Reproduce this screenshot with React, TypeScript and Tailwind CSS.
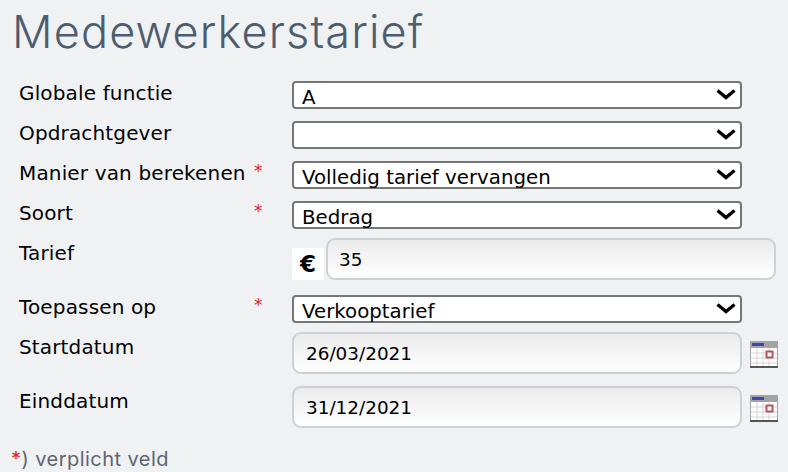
const font = "font-['DejaVu_Sans',sans-serif]";

function Label({ text, required }: { text: string; required?: boolean }) {
  return (
    <div className="w-[292px] shrink-0 pl-[19px] flex text-[20px] tracking-[0.15px] leading-[24px] text-black whitespace-nowrap">
      <span className="w-[235px] shrink-0">{text}</span>
      {required && <span className="text-[#e0241b] text-[17px] leading-[20px]">*</span>}
    </div>
  );
}

function SelectBox({ value }: { value: string }) {
  return (
    <div className="relative w-[450px] h-[28px] bg-white border-2 border-[#767676] rounded-[4px] pl-[8px] pt-[3px] text-[19.8px] leading-[24px] text-black whitespace-nowrap">
      {value}
      <svg className="absolute right-[4px] top-[5px]" width="20" height="12" viewBox="0 0 20 12">
        <path d="M1.5 2.5 L10 9.5 L18.5 2.5" fill="none" stroke="#000" strokeWidth="3.4" />
      </svg>
    </div>
  );
}

function TextBox({ value, textPad }: { value: string; textPad: string }) {
  return (
    <input
      readOnly
      defaultValue={value}
      className={`${font} ${textPad} w-[450px] h-[42px] rounded-[9px] border-2 border-[#cdd0d5] bg-gradient-to-b from-[#ebebeb] to-white text-[18.4px] text-black outline-none`}
    />
  );
}

function CalendarIcon() {
  return (
    <svg width="28" height="27" viewBox="0 0 28 27" className="ml-[8px] mt-[9px] shrink-0">
      <rect x="0" y="0" width="28" height="27" fill="#a3a3a3" />
      <rect x="1" y="7" width="26" height="18" fill="#fff" />
      <rect x="2" y="2" width="12" height="3" fill="#4343b5" />
      <path d="M7 7v18M13 7v18M19 7v18M1 12h26M1 17h26M1 22h26" stroke="#d4d4d4" strokeWidth="1" />
      <rect x="16.5" y="10.5" width="6" height="6" fill="#fff" stroke="#b5555a" strokeWidth="2" />
      <rect x="0" y="25" width="28" height="2" fill="#555" />
    </svg>
  );
}

export default function App() {
  return (
    <div className={`${font} w-[788px] h-[472px] overflow-hidden bg-[#f0f1f3]`}>
      <h1 className="pl-[12px] pt-[5px] h-[81px] font-['Inter',sans-serif] font-light text-[45px] tracking-[1.15px] leading-[54px] text-[#4d5d70]">
        Medewerkerstarief
      </h1>

      <div className="flex">
        <Label text="Globale functie" />
        <SelectBox value="A" />
      </div>
      <div className="flex mt-[12px]">
        <Label text="Opdrachtgever" />
        <SelectBox value="" />
      </div>
      <div className="flex mt-[12px]">
        <Label text="Manier van berekenen" required />
        <SelectBox value="Volledig tarief vervangen" />
      </div>
      <div className="flex mt-[12px]">
        <Label text="Soort" required />
        <SelectBox value="Bedrag" />
      </div>

      <div className="flex mt-[9px]">
        <div className="w-[292px] pt-[3px]">
          <Label text="Tarief" />
        </div>
        <div className="w-[32px] h-[32px] mt-[10px] mr-[2px] bg-white flex items-center justify-center text-[23px] font-bold">
          €
        </div>
        <TextBox value="35" textPad="pl-[11px]" />
      </div>

      <div className="flex mt-[15px]">
        <Label text="Toepassen op" required />
        <SelectBox value="Verkooptarief" />
      </div>

      <div className="flex mt-[9px]">
        <div className="pt-[3px]">
          <Label text="Startdatum" />
        </div>
        <TextBox value="26/03/2021" textPad="pl-[12px]" />
        <CalendarIcon />
      </div>
      <div className="flex mt-[12px]">
        <div className="pt-[3px]">
          <Label text="Einddatum" />
        </div>
        <TextBox value="31/12/2021" textPad="pl-[12px]" />
        <CalendarIcon />
      </div>

      <p className="pl-[11px] mt-[20px] font-['Inter',sans-serif] text-[20px] tracking-[0.45px] leading-[22px] text-[#5d6570]">
        <span className="text-[#e0241b]">*</span>) verplicht veld
      </p>
    </div>
  );
}
